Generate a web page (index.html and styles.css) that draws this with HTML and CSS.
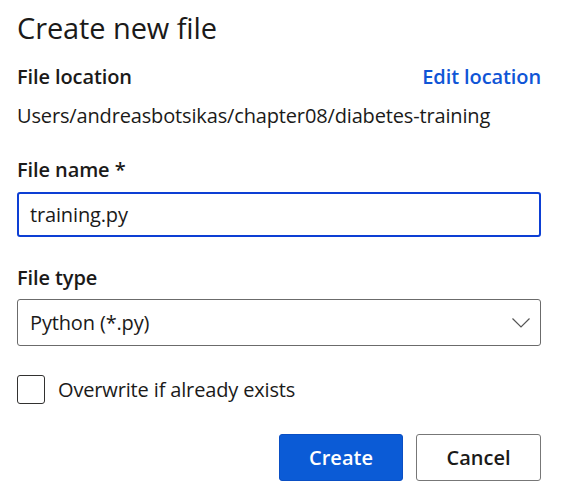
FILE: index.html
```html
<!DOCTYPE html>
<html>
<head>
<meta charset="utf-8">
<link rel="stylesheet" href="styles.css">
</head>
<body>
<div class="dialog">
  <h1 class="title">Create new file</h1>
  <div class="row-between">
    <span class="label">File location</span>
    <a class="link" href="#">Edit location</a>
  </div>
  <div class="path">Users/andreasbotsikas/chapter08/diabetes-training</div>

  <div class="label field-label">File name *</div>
  <div class="input focused">training.py</div>

  <div class="label field-label type-label">File type</div>
  <div class="input select">
    <span>Python (*.py)</span>
    <svg class="chev" width="18" height="10" viewBox="0 0 18 10"><path d="M0.5 0.5 L9 9 L17.5 0.5" fill="none" stroke="#555" stroke-width="1.2"/></svg>
  </div>

  <label class="check-row">
    <span class="checkbox"></span>
    <span class="check-text">Overwrite if already exists</span>
  </label>

  <div class="actions">
    <button class="btn primary">Create</button>
    <button class="btn secondary">Cancel</button>
  </div>
</div>
</body>
</html>
```
FILE: styles.css
```css
html, body {
  margin: 0;
  padding: 0;
  background: #fff;
}
body {
  font-family: "Open Sans", "Noto Sans", sans-serif;
  color: #1b1a19;
}
.dialog {
  width: 524px;
  margin-left: 17px;
  padding-top: 8px;
  display: flex;
  flex-direction: column;
}
.title {
  margin: 0;
  font-size: 29px;
  font-weight: 400;
  line-height: 40px;
  letter-spacing: -0.1px;
}
.row-between {
  display: flex;
  justify-content: space-between;
  align-items: baseline;
  margin-top: 17px;
}
.label {
  font-size: 20px;
  font-weight: 600;
  line-height: 24px;
  letter-spacing: -0.1px;
}
.link {
  font-size: 20px;
  font-weight: 600;
  color: #0f55d6;
  text-decoration: none;
  line-height: 24px;
  letter-spacing: -0.1px;
}
.path {
  font-size: 20px;
  line-height: 24px;
  margin-top: 15px;
  letter-spacing: -0.15px;
}
.field-label {
  margin-top: 30px;
}
.type-label {
  margin-top: 29px;
}
.input {
  margin-top: 10px;
  height: 45px;
  box-sizing: border-box;
  border: 1px solid #6b6b6b;
  border-radius: 3px;
  font-size: 20px;
  letter-spacing: -0.15px;
  display: flex;
  align-items: center;
  padding: 0 12px;
}
.input.focused {
  border: 2px solid #0d3fd4;
  padding-left: 11px;
}
.select {
  margin-top: 9px;
  height: 47px;
  justify-content: space-between;
  padding-right: 10px;
}
.chev {
  display: block;
}
.check-row {
  display: flex;
  align-items: center;
  margin-top: 29px;
  gap: 13px;
}
.checkbox {
  width: 28px;
  height: 29px;
  box-sizing: border-box;
  border: 1.5px solid #323130;
  border-radius: 3px;
}
.check-text {
  font-size: 20px;
  letter-spacing: -0.15px;
}
.actions {
  display: flex;
  justify-content: flex-end;
  gap: 13px;
  margin-top: 30px;
}
.btn {
  height: 47px;
  box-sizing: border-box;
  border-radius: 3px;
  font-family: "Open Sans", "Noto Sans", sans-serif;
  font-size: 20px;
  font-weight: 600;
  padding: 0;
}
.primary {
  width: 124px;
  background: #0b5bd6;
  border: 1px solid #0a4fc4;
  color: #fff;
}
.secondary {
  width: 125px;
  background: #fff;
  border: 1px solid #777;
  color: #1b1a19;
}
```
